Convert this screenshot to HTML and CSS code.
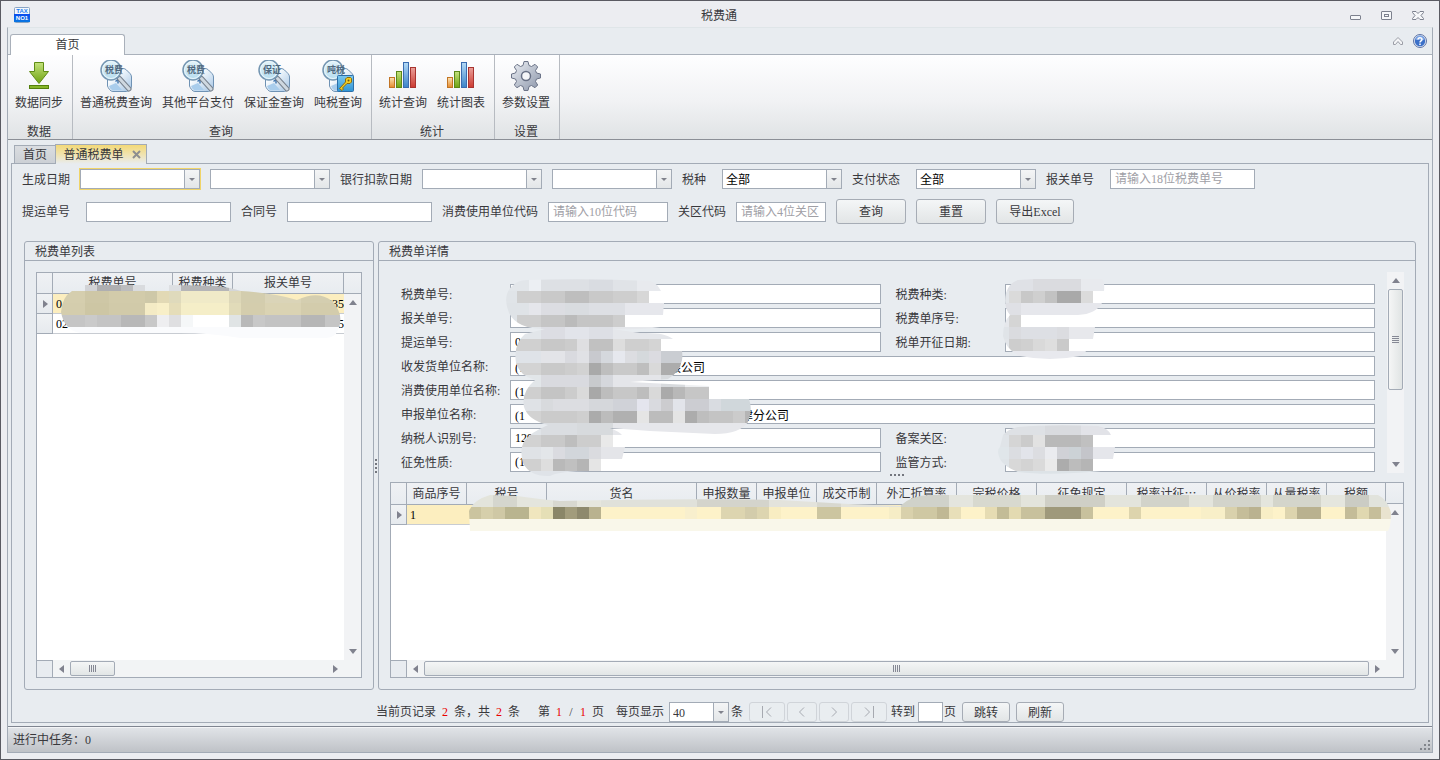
FILE: index.html
```html
<!DOCTYPE html>
<html lang="zh-CN">
<head>
<meta charset="utf-8">
<title>税费通</title>
<link rel="stylesheet" href="styles.css">
</head>
<body>
<svg class="defs" aria-hidden="true">
  <defs>
    <linearGradient id="lens" x1="0" y1="0" x2="0" y2="1"><stop offset="0" stop-color="#e4f4fa"/><stop offset="1" stop-color="#b4dcee"/></linearGradient>
    <linearGradient id="cube" x1="0" y1="0" x2="1" y2="1"><stop offset=".3" stop-color="#fafdff"/><stop offset="1" stop-color="#a4c4e4"/></linearGradient>
    <linearGradient id="green" x1="0" y1="0" x2="0" y2="1"><stop offset="0" stop-color="#c4e27c"/><stop offset="1" stop-color="#6fa311"/></linearGradient>
    <linearGradient id="orange" x1="0" y1="0" x2="0" y2="1"><stop offset="0" stop-color="#fbe3b4"/><stop offset="1" stop-color="#e58a2c"/></linearGradient>
    <linearGradient id="blue" x1="0" y1="0" x2="0" y2="1"><stop offset="0" stop-color="#b4daf6"/><stop offset="1" stop-color="#3c84c8"/></linearGradient>
    <linearGradient id="key-tile" x1="0" y1="0" x2="0" y2="1"><stop offset="0" stop-color="#7cc8ee"/><stop offset="1" stop-color="#2f94d4"/></linearGradient>
    <linearGradient id="red" x1="0" y1="0" x2="0" y2="1"><stop offset="0" stop-color="#eaa09a"/><stop offset="1" stop-color="#cc3a30"/></linearGradient>
    <linearGradient id="steel" x1="0" y1="0" x2="1" y2="1"><stop offset="0" stop-color="#eef1f6"/><stop offset="1" stop-color="#8a94a8"/></linearGradient>
    <linearGradient id="logo" x1="0" y1="0" x2="0" y2="1"><stop offset="0" stop-color="#0a4cf0"/><stop offset="1" stop-color="#0a78e0"/></linearGradient>
    <g id="search-doc">
      <path d="M12 8.500h11q2 0 3.500 1.500l3.500 3.500q1.500 1.500 1.500 3.500v9q0 2-1.500 3.500t-3.500 2H13q-2 0-3.500-2T7.500 26v-8z" fill="url(#cube)" stroke="#6f92b4"/>
      <path d="M9 26l7-3 6 7-9 .5q-3-1-4-4.500z" fill="#a9cdec"/>
      <path d="M15.500 21.500l2.500-2 2 1M18 20v3.500" fill="none" stroke="#4478b0" stroke-width="1.500"/>
      <path d="M19.500 18.500L29 29" stroke="#78828e" stroke-width="5" stroke-linecap="round"/>
      <path d="M19.500 18.500L29 29" stroke="#cfd8e0" stroke-width="3" stroke-linecap="round"/>
      <circle cx="11" cy="10" r="10" fill="url(#lens)" stroke="#7596b2" stroke-width="1.500"/>
      <circle cx="11" cy="10" r="8.500" fill="none" stroke="#eef8fc"/>
    </g>
    <g id="chart">
      <rect x="2.500" y="17.500" width="5" height="10" fill="url(#orange)" stroke="#c27424"/>
      <rect x="9.500" y="11.500" width="5" height="16" fill="url(#green)" stroke="#5c8818"/>
      <rect x="16.500" y="2.500" width="5" height="25" fill="url(#blue)" stroke="#3a6cb0"/>
      <rect x="23.500" y="7.500" width="5" height="20" fill="url(#red)" stroke="#a83430"/>
    </g>
  </defs>
</svg>

<div class="window">
  <header class="titlebar">
    <svg class="logo" width="16" height="16" viewBox="0 0 16 16"><rect x=".5" y=".5" width="15" height="15" rx="1" fill="#f4f8fc" stroke="#8aa4c4"/><rect y="7" width="16" height="8" fill="url(#logo)"/><text x="8" y="6" class="logo-top">TAX</text><text x="8" y="13" class="logo-bottom">NO1</text></svg>
    <h1 class="title">税费通</h1>
    <div class="window-buttons">
      <button aria-label="最小化"><svg width="12" height="10" viewBox="0 0 12 10"><rect x=".5" y="4.500" width="10" height="4" rx=".5"/></svg></button>
      <button aria-label="最大化"><svg width="12" height="10" viewBox="0 0 12 10"><rect x=".5" y=".5" width="10" height="8" rx=".5"/><rect x="3.500" y="3.500" width="4" height="2"/></svg></button>
      <button aria-label="关闭"><svg width="12" height="10" viewBox="0 0 12 10"><path d="M.5.5h3.500l2 2 2-2h3.500v1L9 4.500l2.500 3v1H8l-2-2-2 2H.5v-1L3 4.500.5 1.500z"/></svg></button>
    </div>
  </header>

  <div class="frame">
    <div class="ribbon-tabs">
      <button class="ribbon-tab">首页</button>
      <div class="ribbon-tools">
        <button aria-label="折叠功能区"><svg width="10" height="8" viewBox="0 0 10 8"><path d="M.5 5L5 .5 9.500 5v2.500H7.500L5 4.500 2.500 7.500h-2z" fill="#f4f5f7" stroke="#9a9da6"/></svg></button>
        <button aria-label="帮助"><svg width="14" height="14" viewBox="0 0 14 14"><circle cx="7" cy="7" r="6.500" fill="#dfe6f2" stroke="#5e73a4"/><circle cx="7" cy="7" r="5.200" fill="#3c70c8"/><path d="M2.500 6a4.500 4.500 0 0 1 9 0z" fill="#7ba4e4"/><path d="M5 5.500C5 3.200 9 3.200 9 5.400 9 6.800 7 6.800 7 8.500M7 9.500v1.500" fill="none" stroke="#fff" stroke-width="1.500"/></svg></button>
      </div>
    </div>

    <nav class="ribbon">
      <section class="ribbon-group">
        <div class="ribbon-items">
          <button class="ribbon-button"><svg width="32" height="32" viewBox="0 0 32 32"><path d="M11.500 2.500h9v9h5L16 23.500 6.500 11.500h5z" fill="url(#green)" stroke="#5f8c14"/><rect x="6.500" y="25.500" width="19" height="3" fill="#86b52a" stroke="#54800c"/></svg>数据同步</button>
        </div>
        <h2>数据</h2>
      </section>
      <section class="ribbon-group">
        <div class="ribbon-items">
          <button class="ribbon-button"><svg width="32" height="32" viewBox="0 0 32 32"><use href="#search-doc"/><text x="5" y="13" class="lens-text">税费</text></svg>普通税费查询</button>
          <button class="ribbon-button"><svg width="32" height="32" viewBox="0 0 32 32"><use href="#search-doc"/><text x="5" y="13" class="lens-text">税费</text></svg>其他平台支付</button>
          <button class="ribbon-button"><svg width="32" height="32" viewBox="0 0 32 32"><use href="#search-doc"/><text x="5" y="13" class="lens-text">保证</text></svg>保证金查询</button>
          <button class="ribbon-button"><svg width="32" height="32" viewBox="0 0 32 32"><use href="#search-doc"/><text x="5" y="13" class="lens-text">吨税</text><rect x="15.500" y="15.500" width="16" height="16" rx="1" fill="url(#key-tile)" stroke="#2c6ea8"/><path d="M25 17.500h3.500l1 1V22L28 23.500h-3L20.500 28l1 1-1.500 1.500-2.500-2L23.500 22v-3z" fill="#f4cc20" stroke="#8a6c10"/><circle cx="26.500" cy="20.500" r="1" fill="#705810"/></svg>吨税查询</button>
        </div>
        <h2>查询</h2>
      </section>
      <section class="ribbon-group">
        <div class="ribbon-items">
          <button class="ribbon-button"><svg width="32" height="32" viewBox="0 0 32 32"><use href="#chart"/></svg>统计查询</button>
          <button class="ribbon-button"><svg width="32" height="32" viewBox="0 0 32 32"><use href="#chart"/></svg>统计图表</button>
        </div>
        <h2>统计</h2>
      </section>
      <section class="ribbon-group">
        <div class="ribbon-items">
          <button class="ribbon-button"><svg width="32" height="32" viewBox="0 0 32 32"><path d="M14 1.500h4l1 4 2.500 1L25 4.300 27.700 7l-2.200 3.500 1 2.500 4 1v4l-4 1-1 2.500 2.200 3.500-2.700 2.700-3.500-2.200-2.500 1-1 4h-4l-1-4-2.500-1L7 27.700 4.300 25l2.200-3.500-1-2.500-4-1v-4l4-1 1-2.500L4.300 7 7 4.300l3.500 2.200 2.500-1z" fill="url(#steel)" stroke="#6c7488" stroke-linejoin="round"/><circle cx="16" cy="16" r="4.500" fill="#f5f6f8" stroke="#687084" stroke-width="1.500"/></svg>参数设置</button>
        </div>
        <h2>设置</h2>
      </section>
    </nav>

    <div class="doc-tabs">
      <button class="doc-tab">首页</button>
      <button class="doc-tab active">普通税费单<svg width="9" height="9" viewBox="0 0 9 9"><path d="M1 1l7 7M8 1L1 8" stroke="#8d8e90" stroke-width="2"/></svg></button>
    </div>

    <main class="page">
      <form class="filters">
        <div class="filter-row">
          <label class="w58" for="made-from">生成日期</label>
          <span class="combo focus"><input id="made-from"><button type="button" class="drop" aria-label="选择日期"></button></span>
          <span class="combo"><input aria-label="生成日期止"><button type="button" class="drop" aria-label="选择日期"></button></span>
          <label class="w83" for="bank-from">银行扣款日期</label>
          <span class="combo"><input id="bank-from"><button type="button" class="drop" aria-label="选择日期"></button></span>
          <span class="combo"><input aria-label="银行扣款日期止"><button type="button" class="drop" aria-label="选择日期"></button></span>
          <label class="w40" for="tax-kind">税种</label>
          <span class="combo"><select id="tax-kind"><option>全部</option></select><span class="drop"></span></span>
          <label class="w64" for="pay-state">支付状态</label>
          <span class="combo"><select id="pay-state"><option>全部</option></select><span class="drop"></span></span>
          <label class="w64" for="entry-no">报关单号</label>
          <input class="box wide" id="entry-no" placeholder="请输入18位税费单号">
        </div>
        <div class="filter-row">
          <label class="w64" for="bill-no">提运单号</label>
          <input class="box wide" id="bill-no">
          <label class="w46" for="contract">合同号</label>
          <input class="box wide" id="contract">
          <label class="w106" for="owner-code">消费使用单位代码</label>
          <input class="box medium" id="owner-code" placeholder="请输入10位代码">
          <label class="w58" for="customs">关区代码</label>
          <input class="box short" id="customs" placeholder="请输入4位关区">
          <button type="button" class="button">查询</button>
          <button type="button" class="button">重置</button>
          <button type="button" class="button export">导出Excel</button>
        </div>
      </form>

      <div class="panels">
        <section class="panel list-panel">
          <h2>税费单列表</h2>
          <div class="panel-body">
            <div class="grid">
              <table class="list-table">
                <colgroup><col class="c-mark"><col class="c120"><col class="c60"><col></colgroup>
                <thead><tr><th></th><th>税费单号</th><th>税费种类</th><th>报关单号</th></tr></thead>
                <tbody>
                  <tr class="selected"><td class="mark"><i class="arrow right"></i></td><td>0</td><td></td><td class="end">535</td></tr>
                  <tr><td class="mark"></td><td>02</td><td></td><td class="end">5</td></tr>
                </tbody>
              </table>
              <div class="side"><div class="side-head"></div><div class="vscroll"><i class="arrow up"></i><i class="arrow down"></i></div></div>
              <div class="hscroll"><span class="corner"></span><i class="arrow left"></i><span class="track"><span class="thumb small"></span></span><i class="arrow right"></i></div>
            </div>
            <svg class="smudge smudge-list" data-smudge="list" viewBox="61 279 288 60" width="288" height="60"></svg>
          </div>
        </section>

        <div class="splitter vertical"><i></i><i></i><i></i><i></i></div>

        <section class="panel detail-panel">
          <h2>税费单详情</h2>
          <div class="panel-body">
            <div class="detail">
              <div class="fields">
                <label for="f1">税费单号:</label><input class="box" id="f1"><label class="second" for="f2">税费种类:</label><input class="box" id="f2">
                <label for="f3">报关单号:</label><input class="box" id="f3"><label class="second" for="f4">税费单序号:</label><input class="box" id="f4" value="0">
                <label for="f5">提运单号:</label><input class="box" id="f5" value="0"><label class="second" for="f6">税单开征日期:</label><input class="box" id="f6">
                <label for="f7">收发货单位名称:</label><input class="box full" id="f7" value="(1　　　　　　　　　　　　限公司">
                <label for="f8">消费使用单位名称:</label><input class="box full" id="f8" value="(1　　　　　　　　　　　有限公司">
                <label for="f9">申报单位名称:</label><input class="box full" id="f9" value="(1　　　　　　　　　　　　　　　　　　津分公司">
                <label for="f10">纳税人识别号:</label><input class="box" id="f10" value="129"><label class="second" for="f11">备案关区:</label><input class="box" id="f11">
                <label for="f12">征免性质:</label><input class="box" id="f12" value="(1"><label class="second" for="f13">监管方式:</label><input class="box" id="f13">
              </div>
              <div class="vscroll"><i class="arrow up"></i><span class="vthumb"></span><i class="arrow down"></i></div>
            </div>
            <div class="splitter horizontal"><i></i><i></i><i></i><i></i></div>
            <div class="grid">
              <table>
                <colgroup><col class="c-mark"><col class="c60"><col class="c80"><col class="c150"><col class="c60"><col class="c60"><col class="c60"><col class="c80"><col class="c80"><col class="c90"><col class="c80"><col class="c60"><col class="c60"><col></colgroup>
                <thead><tr><th></th><th>商品序号</th><th>税号</th><th>货名</th><th>申报数量</th><th>申报单位</th><th>成交币制</th><th>外汇折算率</th><th>完税价格</th><th>征免规定</th><th>税率计征<span class="cjk">…</span></th><th>从价税率</th><th>从量税率</th><th>税额</th></tr></thead>
                <tbody><tr class="selected"><td class="mark"><i class="arrow right"></i></td><td>1</td><td></td><td></td><td></td><td></td><td></td><td></td><td></td><td></td><td></td><td></td><td></td><td></td></tr></tbody>
              </table>
              <div class="side"><div class="side-head"></div><div class="vscroll"><i class="arrow up"></i><i class="arrow down"></i></div></div>
              <div class="hscroll"><span class="corner"></span><i class="arrow left"></i><span class="track"><span class="thumb"></span></span><i class="arrow right"></i></div>
            </div>
            <svg class="smudge smudge-left" data-smudge="left" viewBox="497 279 264 204" width="264" height="204"></svg>
            <svg class="smudge smudge-right" data-smudge="right" viewBox="997 279 120 204" width="120" height="204"></svg>
            <svg class="smudge smudge-goods" data-smudge="goods" viewBox="469 495 924 36" width="924" height="36"></svg>
          </div>
        </section>
      </div>

      <footer class="pager">
        <span class="counts records">当前页记录<b>2</b><span>条，共</span><b>2</b><span>条</span></span>
        <span class="counts pages">第<b>1</b><span class="slash">/</span><b>1</b><span>页</span></span>
        <label for="page-size">每页显示</label>
        <span class="combo size"><select id="page-size"><option>40</option></select><span class="drop"></span></span>
        <span class="unit">条</span>
        <button class="button nav edge" disabled aria-label="首页"><svg width="10" height="12" viewBox="0 0 10 12"><path d="M.5 0v12M9 1.500L4.500 6 9 10.500"/></svg></button>
        <button class="button nav" disabled aria-label="上一页"><svg width="6" height="12" viewBox="0 0 6 12"><path d="M5 1.500L.5 6 5 10.500"/></svg></button>
        <button class="button nav" disabled aria-label="下一页"><svg width="6" height="12" viewBox="0 0 6 12"><path d="M1 1.500L5.500 6 1 10.500"/></svg></button>
        <button class="button nav edge" disabled aria-label="末页"><svg width="10" height="12" viewBox="0 0 10 12"><path d="M1 1.500L5.500 6 1 10.500M9.500 0v12"/></svg></button>
        <label class="goto" for="goto">转到</label>
        <input class="box goto-box" id="goto">
        <span class="unit">页</span>
        <button class="button jump">跳转</button>
        <button class="button jump refresh">刷新</button>
      </footer>
    </main>

    <div class="status">
      <span>进行中任务：0</span>
      <svg width="11" height="11" viewBox="0 0 11 11"><path d="M8 0h2v2H8zM8 4h2v2H8zM4 4h2v2H4zM8 8h2v2H8zM4 8h2v2H4zM0 8h2v2H0z" fill="#82868c"/></svg>
    </div>
  </div>
</div>
<script src="smudges.js"></script>
</body>
</html>
```
FILE: styles.css
```css
* { box-sizing: border-box; }

body {
  margin: 0;
  font: 12px/16px "Liberation Serif", "Noto Sans CJK SC", sans-serif;
  color: #38383c;
}

h1, h2 { margin: 0; font-size: 12px; font-weight: 400; }

button, input, select {
  font: inherit;
  color: inherit;
  margin: 0;
  padding: 0;
  border: 0;
  background: none;
  border-radius: 0;
}

select { appearance: none; }
svg { display: block; }
.defs { position: absolute; width: 0; height: 0; }
.cjk { font-family: "Noto Sans CJK SC", sans-serif; }

.window {
  min-height: 100vh;
  display: flex;
  flex-direction: column;
  border: 1px solid #5a5a62;
  background: #ecedf1;
}

/* Title bar */
.titlebar {
  height: 26px;
  padding: 2px 15px 0 13px;
  display: grid;
  grid-template-columns: 1fr auto 1fr;
  align-items: center;
}
.title { padding-top: 2px; }
.logo-top, .logo-bottom { font: 700 6px "Liberation Sans", sans-serif; text-anchor: middle; fill: #1c7cf0; }
.logo-bottom { fill: #fff; }
.window-buttons { justify-self: end; display: flex; gap: 19px; padding-top: 2px; }
.window-buttons svg { fill: #f6f7f9; stroke: #7d818e; }

.frame {
  flex: 1;
  margin: 0 6px 6px;
  display: flex;
  flex-direction: column;
  border: 1px solid #a3abb6;
  border-top-color: #dfe5e8;
  background: #e8ecf0;
}

/* Ribbon */
.ribbon-tabs {
  height: 27px;
  display: flex;
  justify-content: space-between;
  align-items: flex-end;
  padding: 0 5px 0 2px;
  border-bottom: 1px solid #aab1bb;
}
.ribbon-tab {
  width: 115px;
  height: 21px;
  margin-bottom: -1px;
  border: 1px solid #a9b0ba;
  border-bottom: 0;
  border-radius: 3px 3px 0 0;
  background: #fff;
}
.ribbon-tools { display: flex; align-items: center; gap: 10px; padding-bottom: 6px; }

.ribbon {
  height: 85px;
  display: flex;
  border-bottom: 1px solid #8b8f96;
  background: linear-gradient(#fefeff, #f1f2f4 55%, #e0e3e5);
}
.ribbon-group {
  display: flex;
  flex-direction: column;
  justify-content: space-between;
  padding: 5px 9px 0 7px;
  border-right: 1px solid #b7bbc1;
}
.ribbon-group h2 { text-align: center; line-height: 14px; }
.ribbon-items { display: flex; gap: 10px; }
.ribbon-button { display: flex; flex-direction: column; align-items: center; gap: 3px; line-height: 16px; white-space: nowrap; }
.lens-text { font: 700 9px "Noto Sans CJK SC", sans-serif; fill: #50687e; }

/* Document tabs */
.doc-tabs { display: flex; align-items: flex-end; height: 23px; padding: 0 6px; }
.doc-tab {
  height: 18px;
  width: 41px;
  border: 1px solid #a3abb6;
  border-width: 1px 0 0 1px;
  background: linear-gradient(#dadde1, #ccd0d5);
}
.doc-tab.active {
  position: relative;
  width: 92px;
  height: 20px;
  margin-bottom: -1px;
  padding-left: 2px;
  display: flex;
  align-items: center;
  justify-content: center;
  gap: 8px;
  border-width: 1px;
  border-bottom: 0;
  background: linear-gradient(#f3d977, #f0e3b0 50%, #e8ecf0);
}

.page {
  flex: 1;
  display: flex;
  flex-direction: column;
  margin: 0 3px 3px;
  padding-top: 5px;
  border: 1px solid #a3abb6;
}

/* Filters */
.filters { display: flex; flex-direction: column; gap: 10px; padding-left: 10px; }
.filter-row { display: flex; align-items: center; white-space: nowrap; }
.filter-row > :not(label) { margin-right: 10px; }
.filter-row label { flex: none; padding-top: 1px; }
.w40 { width: 40px; }
.w46 { width: 46px; }
.w58 { width: 58px; }
.w64 { width: 64px; }
.w83 { width: 82px; }
.w106 { width: 106px; }

.box {
  height: 20px;
  min-width: 0;
  padding: 1px 4px 0;
  border: 1px solid #a3abb6;
  background: #fff;
  color: #000;
}
.box::placeholder { color: #a0a0a6; }
.box.wide { width: 145px; }
.box.medium { width: 120px; }
.box.short { width: 90px; }

.combo {
  width: 120px;
  height: 20px;
  display: inline-flex;
  border: 1px solid #a3abb6;
  background: #fff;
}
.combo.focus { outline: 1px solid #f0d468; }
.combo input, .combo select { flex: 1; min-width: 0; padding: 1px 3px 0; color: #000; }
.drop {
  width: 15px;
  display: flex;
  align-items: center;
  justify-content: center;
  border-left: 1px solid #a3abb6;
  background: linear-gradient(#f4f5f6, #e3e6e8);
  pointer-events: none;
}
.drop::before { content: ""; border: 3px solid transparent; border-top-color: #80828c; border-bottom: 0; }

.button {
  width: 70px;
  height: 25px;
  padding-top: 1px;
  border: 1px solid #a6acb5;
  border-radius: 3px;
  background: linear-gradient(#f4f6f7, #e2e5e6);
}
.button.export { width: 78px; }

/* Panels */
.panels { flex: 1; display: flex; margin: 17px 12px 12px; }
.panel { display: flex; flex-direction: column; border: 1px solid #a3abb6; border-radius: 3px; }
.panel > h2 { height: 19px; padding-left: 10px; line-height: 20px; border-bottom: 1px solid #a3abb6; }
.panel-body { position: relative; flex: 1; display: flex; flex-direction: column; padding: 11px; }
.list-panel { width: 350px; }
.detail-panel { flex: 1; min-width: 0; }

.splitter { display: flex; align-items: center; justify-content: center; gap: 2px; }
.splitter i { width: 2px; height: 2px; background: #73767e; }
.splitter.vertical { width: 4px; flex-direction: column; }
.splitter.horizontal { height: 9px; align-items: flex-start; padding-top: 1px; }

/* Data grids */
.grid {
  flex: 1;
  display: grid;
  grid-template-columns: minmax(0, 1fr) 17px;
  grid-template-rows: 1fr 17px;
  border: 1px solid #a3abb6;
  background: #fff;
}
table { width: 100%; table-layout: fixed; border-collapse: separate; border-spacing: 0; align-self: start; }
th, td { padding: 0; overflow: hidden; white-space: nowrap; font-weight: 400; border: 0 solid #a3abb6; }
th { height: 21px; line-height: 20px; border-width: 0 1px 1px 0; background: linear-gradient(#eff1f4, #e8ecf0); }
td { height: 20px; padding-left: 3px; line-height: 18px; border-bottom: 1px solid #c8ccd2; color: #000; }
td.mark { padding: 0 0 0 6px; border-right-width: 1px; border-color: #a3abb6; background: linear-gradient(#f0f2f4, #e6eaee); }
td.end { text-align: right; }
tr.selected td:not(.mark) { background: #fceebf; }
.c-mark { width: 16px; }
.c60 { width: 60px; }
.c80 { width: 80px; }
.c90 { width: 90px; }
.c120 { width: 120px; }
.c150 { width: 150px; }

.side { display: flex; flex-direction: column; }
.side-head { height: 21px; border-bottom: 1px solid #a3abb6; background: linear-gradient(#eff1f4, #e8ecf0); }
.vscroll {
  flex: 1;
  display: flex;
  flex-direction: column;
  align-items: center;
  padding: 6px 0;
  background: #f2f3f5;
}
.vscroll .down { margin-top: auto; }

.arrow { display: block; flex: none; border: 4px solid transparent; }
.arrow.up { border-top: 0; border-bottom: 5px solid #80828e; }
.arrow.down { border-bottom: 0; border-top: 5px solid #80828e; }
.arrow.left { border-left: 0; border-right: 5px solid #80828e; }
.arrow.right { border-right: 0; border-left: 5px solid #80828e; }

.hscroll {
  grid-column: 1 / -1;
  display: flex;
  align-items: center;
  gap: 6px;
  padding-right: 23px;
  background: #f2f4f5;
}
.corner { width: 16px; height: 17px; border: 1px solid #a3abb6; border-width: 1px 1px 0 0; background: #e8ecf0; }
.track { flex: 1; height: 15px; display: flex; }
.thumb {
  flex: 1;
  display: flex;
  align-items: center;
  justify-content: center;
  border: 1px solid #a3abb6;
  border-radius: 2px;
  background: linear-gradient(#f4f6f6, #e2e6e6);
}
.thumb.small { flex: none; width: 45px; }
.thumb::before { content: ""; width: 8px; height: 7px; background: repeating-linear-gradient(90deg, #858894 0 1px, transparent 1px 2px); }

/* Detail form */
.detail { height: 201px; display: flex; }
.fields {
  flex: 1;
  display: grid;
  grid-template-columns: 109px minmax(0, 1fr) 124px minmax(0, 1fr);
  grid-auto-rows: 20px;
  align-items: center;
  gap: 4px 0;
  padding: 12px 12px 0 11px;
}
.fields label { padding-top: 1px; }
.fields .second { padding-left: 15px; }
.fields .full { grid-column: span 3; }
.detail .vscroll { flex: none; width: 17px; padding: 6px 0; }
.vthumb {
  width: 15px;
  height: 101px;
  margin-top: 6px;
  display: flex;
  align-items: center;
  justify-content: center;
  border: 1px solid #a3abb6;
  border-radius: 2px;
  background: linear-gradient(90deg, #f5f6f6, #e0e4e4);
}
.vthumb::before { content: ""; width: 7px; height: 7px; background: repeating-linear-gradient(#858894 0 1px, transparent 1px 2px); }

/* Obscured values lie over the form and grids */
.smudge { position: absolute; pointer-events: none; }
.smudge-list { left: 36px; top: 18px; }
.smudge-left { left: 118px; top: 18px; }
.smudge-right { left: 618px; top: 18px; }
.smudge-goods { left: 90px; top: 234px; }

/* Pager */
.pager { height: 20px; display: flex; justify-content: center; align-items: center; white-space: nowrap; }
.counts { display: flex; gap: 6px; }
.counts b { color: #e80000; font-weight: 400; }
.records { margin-right: 18px; }
.pages { margin-right: 12px; }
.slash { width: 6px; text-align: center; }
.combo.size { width: 60px; margin: 0 2px 0 5px; }
.combo.size select { color: #38383c; }
.unit { margin-right: 6px; }
.pager .button { height: 20px; }
.pager .nav { width: 30px; margin-right: 2px; padding-top: 0; display: flex; align-items: center; justify-content: center; border-color: #d0d4d9; background: #e9edf0; }
.pager .edge { width: 36px; }
.nav svg { fill: none; stroke: #a6a9b0; }
.goto { margin: 0 3px 0 2px; }
.goto-box { width: 25px; margin-right: 1px; }
.pager .jump { width: 48px; }
.pager .refresh { margin-left: 6px; }

.status {
  height: 26px;
  display: flex;
  align-items: center;
  justify-content: space-between;
  padding: 0 0 0 5px;
  border-top: 1px solid #7f8590;
  background: linear-gradient(#f4f5f7 0 1px, #e0e3e7 1px, #bfc2c7);
}
.status svg { align-self: flex-end; margin-bottom: 1px; margin-right: 1px; }
```
FILE: smudges.js
```js
// Each row: [top, x, colour, x, colour, ..., end x]; cells are 12px tall.
const SMUDGES = {
  list: {
    outline: "M61 312Q62 297 72 291H85V285H145V291H169V285L215 286Q229 287 241 291Q275 293 297 300Q318 290 332 301Q345 315 338 330Q335 338 325 338H240Q210 333 180 333H80Q64 330 61 312Z",
    rows: [
      [279, 85, "#d2d3d6", 97, "#afafb1", 121, "#bcbcbe", 133, "#d9dbde", 169, "#dddfe2", 181, "#b5b5b7", 229, "#d4d6d9", 241],
      [291, 61, "#d5ceae", 85, "#cec7a6", 109, "#d2cbaa", 145, "#cec8a8", 157, "#e2d9b5", 169, "#dfdabc", 181, "#f0eac8", 229, "#ddd7b8", 241, "#d3cdae", 265, "#dad4b8", 301, "#d4ceb0", 349],
      [303, 61, "#d4cdad", 85, "#cdc6a4", 109, "#d1caa9", 145, "#f4ebc5", 157, "#f8efc8", 169, "#e5ddb9", 181, "#f5eec8", 229, "#e1dbb9", 241, "#d4cdad", 265, "#dad3b3", 301, "#d3ccac", 349],
      [315, 61, "#c5c5c5", 85, "#cacaca", 97, "#c4c4c4", 121, "#b8b8b8", 145, "#c8c8c8", 157, "#eeeef0", 169, "#dfdfe1", 181, "#f5f7f8", 193, "#ffffff", 229, "#e0e4e5", 241, "#b9b9b9", 253, "#c8c8c8", 265, "#c3c3c3", 301, "#b6b6b6", 325, "#c5c5c5", 349],
      [327, 61, "#fafbfd", 349]
    ]
  },
  left: {
    outline: "M527 280Q590 278 650 281Q657 283 661 291H665L663 315H660V327Q640 330 612 329L640 333Q665 332 673 339H676Q684 348 682 360Q680 372 668 379L630 382L709 386V399H749Q753 410 748 422Q740 434 715 434L650 431L610 428Q620 432 622 435V447H625L622 459H605V471H590Q560 471 550 476Q530 477 523 463Q519 449 525 440Q530 433 548 425Q528 420 524 407Q521 392 535 380Q520 376 516 363Q513 344 525 334L545 329Q517 329 509 313Q502 296 512 286Q518 280 527 280Z",
    rows: [
      [279, 497, "#e2e6ea", 529, "#eceff3", 541, "#dde0e4", 589, "#d9dce1", 613, "#e0e3e7", 637, "#e8eaee", 665],
      [291, 497, "#e0e4e8", 517, "#cfcfcf", 541, "#c9c9c9", 565, "#bebebe", 589, "#c9c9c9", 613, "#cecece", 637, "#d7d7d7", 649],
      [303, 497, "#dfe3e7", 529, "#e5e6eb", 541, "#dcdde2", 565, "#d9dce0", 589, "#dddfe4", 625, "#e6e7ec", 665],
      [315, 497, "#dfe3e7", 517, "#cecece", 541, "#c5c5c5", 565, "#bbbbbb", 577, "#c5c5c5", 613, "#cdcdcd", 625],
      [327, 497, "#e2e6ea", 541, "#dcdde3", 565, "#e2e4ea", 589, "#dddfe5", 613, "#e5e7eb", 680],
      [339, 509, "#d0d0d0", 541, "#c8c8c8", 565, "#cccccc", 577, "#dfdfe1", 589, "#c1c1c1", 613, "#dddddd", 625, "#cfcfcf", 649, "#d4d4d4", 661],
      [351, 509, "#dfe3e8", 541, "#e3e4e8", 565, "#d9dadf", 577, "#e0e1e5", 589, "#c8c9ce", 601, "#d5d8dd", 613, "#e6e8ee", 625, "#dcdde1", 637, "#d5d9dc", 649, "#dbdbe0", 661, "#cacdd2", 685],
      [363, 509, "#d3d3d3", 541, "#c9c9c9", 565, "#cdcdcd", 577, "#d2d2d2", 589, "#a9a9a9", 601, "#bebebe", 613, "#c9c9c9", 637, "#bebebe", 649, "#d9d9d9", 661, "#acacac", 685],
      [375, 509, "#e2e6e9", 541, "#d9dadf", 589, "#c8cacd", 601, "#d5d7dc", 613, "#e4e5e9", 661, "#d7dadd", 685, "#eef0f2", 709],
      [387, 509, "#cfcfcf", 541, "#c4c4c4", 565, "#cccccc", 577, "#dadada", 589, "#a8a8a8", 601, "#bdbdbd", 613, "#c7c7c7", 637, "#bdbdbd", 649, "#d9d9d9", 661, "#aaaaaa", 673, "#b8b8b8", 685, "#c6c6c6", 709],
      [399, 509, "#dfe2e6", 541, "#d8dadd", 553, "#dcdde1", 589, "#d5d7db", 613, "#d0d2d8", 637, "#e4e5ee", 649, "#d9dadf", 661, "#cccccf", 673, "#e2e4ea", 685, "#cccdd2", 709, "#d9dce1", 721, "#d0d7db", 757],
      [411, 509, "#d2d2d2", 541, "#cbcbcb", 577, "#cfcfcf", 589, "#ababab", 601, "#bcbcbc", 613, "#b0b0b0", 637, "#e5e5e5", 649, "#bcbcbc", 673, "#e4e4e4", 685, "#acacac", 697, "#bebebe", 709, "#c4c4c4", 733, "#cbcbcb", 745, "#b5b5b5", 757],
      [423, 509, "#e0e4e8", 541, "#dadde1", 577, "#d7dadd", 613, "#e6e7eb", 757],
      [435, 509, "#d2d2d2", 541, "#c9c9c9", 565, "#bebebe", 577, "#cdcdcd", 601, "#e9e9e9", 613],
      [447, 509, "#dfe2e6", 541, "#e3e6e9", 553, "#dadbe0", 565, "#d2d6db", 589, "#dadbdf", 601, "#e4e5e9", 637],
      [459, 509, "#d0d0d0", 541, "#dedede", 553, "#b9b9b9", 565, "#c0c0c0", 577, "#b5b5b5", 589, "#e5e5e5", 601],
      [471, 509, "#dfe3e8", 601]
    ]
  },
  right: {
    outline: "M1018 280Q1060 277 1102 279Q1105 282 1104 291H1102V303Q1096 314 1078 315L1068 327H1095L1093 339Q1090 350 1080 356Q1050 362 1020 356Q1006 350 1003 336Q1003 322 1010 315Q1003 307 1006 293Q1009 283 1018 280ZM1018 427Q1050 424 1098 426Q1108 428 1111 435V447H1115L1113 459H1101V471Q1050 476 1018 472Q1003 466 1000 459Q996 450 1000 447L1003 435Q1008 429 1018 427Z",
    rows: [
      [279, 997, "#dfe1e6", 1033, "#dadbdf", 1081, "#e8eaee", 1117],
      [291, 997, "#e2e5e9", 1009, "#dadada", 1021, "#c8c8c8", 1033, "#cfcfcf", 1045, "#c2c2c2", 1057, "#a9a9a9", 1081, "#dbdbdb", 1093],
      [303, 997, "#dfe0e5", 1021, "#e6e7ec", 1117],
      [315, 997, "#e6e8ec", 1009, "#d5d5d5", 1021],
      [327, 997, "#e0e4e8", 1009, "#dadbdf", 1021, "#dddfe4", 1057, "#dbdce0", 1069, "#e7e8ec", 1117],
      [339, 997, "#e2e5e9", 1009, "#cdcdcd", 1021, "#d0d0d0", 1033, "#d9d9d9", 1045, "#dedede", 1057, "#cacaca", 1069],
      [351, 997, "#e8e9ee", 1117],
      [423, 997, "#dee1e5", 1045, "#d9dbdf", 1081, "#e2e3e8", 1117],
      [435, 997, "#e0e4e8", 1009, "#d5d5d5", 1021, "#cbcbcb", 1033, "#e2e2e2", 1045, "#b9b9b9", 1081, "#c0c0c0", 1093],
      [447, 997, "#e0e6ea", 1009, "#dbdde1", 1021, "#e2e4ea", 1033, "#dcdde1", 1045, "#eaebef", 1057, "#d0d1d6", 1069, "#ccd2d6", 1081, "#c4c5ca", 1093, "#e5e6eb", 1117],
      [459, 997, "#dfe4e8", 1009, "#d8d8d8", 1021, "#d3d3d3", 1033, "#dadada", 1045, "#eaeaea", 1057, "#acacac", 1069, "#bcbcbc", 1081, "#b5b5b5", 1093],
      [471, 997, "#dde3e7", 1117]
    ]
  },
  goods: {
    outline: "M469 511Q473 500 490 495L517 496Q545 500 560 501Q690 498 780 500Q840 504 900 506Q912 495 930 495H1378Q1388 500 1391 513Q1391 526 1388 531H470Z",
    rows: [
      [495, 469, "#e3e4db", 493, "#d5d6ce", 517, "#e4e5dd", 553, "#d8d8d0", 577, "#e6e6dd", 601, "#e0e1da", 697, "#d4d4cc", 769, "#e3e3dc", 817, "#d8d8d0", 841, "#e3e3dc", 901, "#d0d2ca", 949, "#e4e5de", 973, "#d8d9cf", 1021, "#e3e4dc", 1045, "#cfcfc6", 1105, "#e3e4dc", 1141, "#d2d3ca", 1189, "#e3e4dc", 1213, "#d3d4cb", 1261, "#e4e5dd", 1273, "#d4d5cb", 1321, "#e5e6de", 1345, "#cbccc4", 1369, "#e1e3dc", 1393],
      [507, 469, "#cbc49f", 481, "#d6cfab", 493, "#cfc8a5", 505, "#b9b48f", 529, "#f0e6be", 541, "#e5dfb6", 553, "#8a8668", 565, "#a29c7c", 577, "#8e896d", 589, "#b9b28f", 601, "#fdf2c9", 685, "#f8efcd", 697, "#fdf2c9", 721, "#ddd5b0", 745, "#d3ccab", 757, "#ddd5b0", 769, "#f8edc2", 781, "#fdf2c9", 817, "#ccc5a0", 841, "#fdf2c9", 889, "#f6edc6", 901, "#d9d1ac", 913, "#cfc8a3", 937, "#c0b894", 949, "#e8dfb9", 961, "#fdf2c9", 985, "#e6dcb3", 997, "#c3bc97", 1009, "#e3dab1", 1021, "#c8c19d", 1045, "#9f997b", 1081, "#c8c19d", 1093, "#fdf2c9", 1129, "#ddd4ad", 1141, "#fdf2c9", 1201, "#f8efc8", 1225, "#d9d1ac", 1237, "#c5bd99", 1249, "#bab290", 1261, "#f8eec6", 1273, "#fdf2c9", 1285, "#ddd4ae", 1297, "#b9b18f", 1321, "#fdf2c9", 1345, "#c4bc98", 1357, "#e0d8b0", 1369, "#c6be9a", 1381, "#e9e3cf", 1393],
      [519, 469, "#f9f7ea", 1393]
    ]
  }
};

document.querySelectorAll("[data-smudge]").forEach((svg) => {
  const name = svg.dataset.smudge;
  const { outline, rows } = SMUDGES[name];
  let cells = "";
  for (const [top, ...runs] of rows) {
    for (let i = 0; i < runs.length - 1; i += 2) {
      cells += `<rect x="${runs[i]}" y="${top}" width="${runs[i + 2] - runs[i]}" height="12" fill="${runs[i + 1]}"/>`;
    }
  }
  svg.innerHTML = `<clipPath id="clip-${name}"><path d="${outline}"/></clipPath><g clip-path="url(#clip-${name})">${cells}</g>`;
});
```
